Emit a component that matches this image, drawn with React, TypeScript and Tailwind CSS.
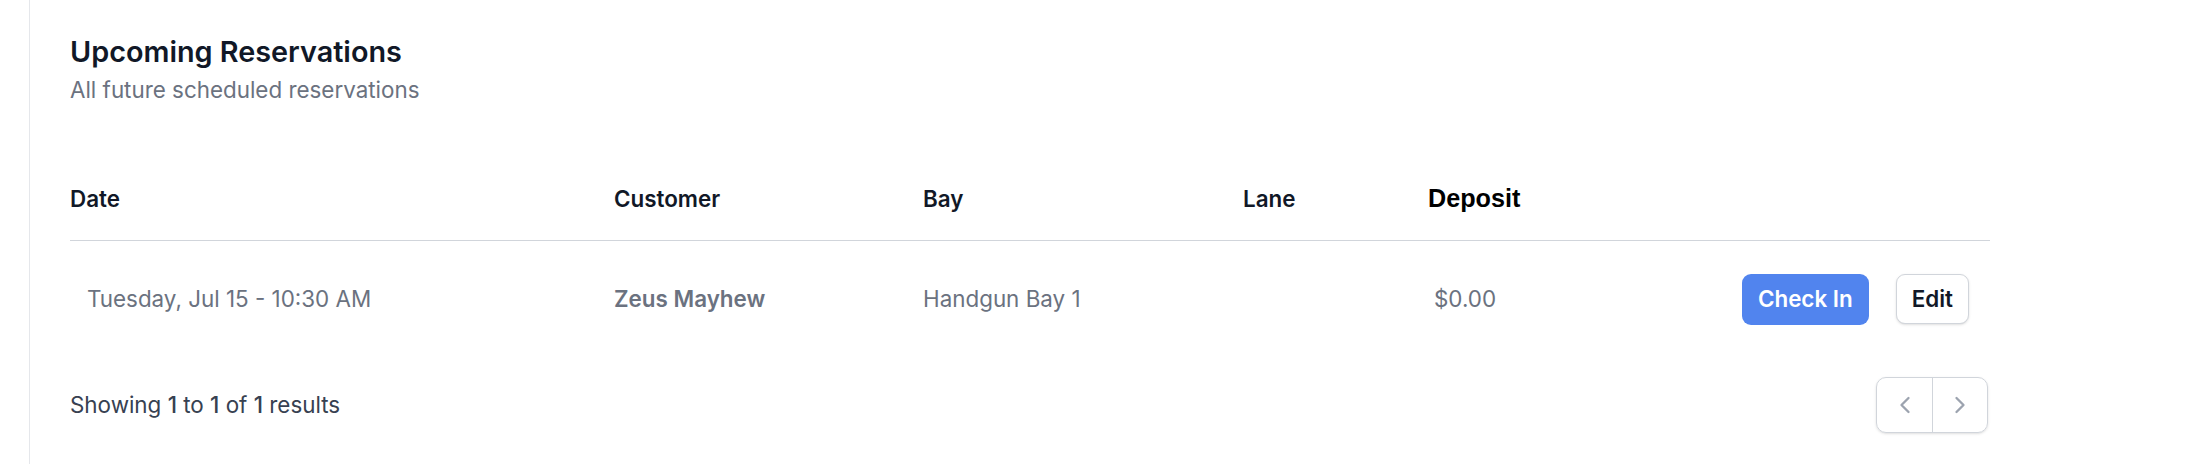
import { ChevronLeft, ChevronRight } from 'lucide-react';

const reservations = [
  {
    id: 1,
    date: 'Tuesday, Jul 15 - 10:30 AM',
    customer: 'Zeus Mayhew',
    bay: 'Handgun Bay 1',
    lane: '',
    deposit: '$0.00',
  },
];

const cols = 'grid grid-cols-[544px_309px_320px_185px_200px_1fr] items-center';

export default function App() {
  return (
    <div className="flex min-h-[464px] bg-white font-['Inter',sans-serif]">
      <div className="w-[29px] shrink-0" />
      <div className="flex-1 border-l border-[#e5e7eb] pl-[40px]">
        <div className="w-[1920px]">
          <div className="pt-[32px]">
            <h2 className="text-[28.8px] leading-[39px] font-semibold text-[#111827]">Upcoming Reservations</h2>
            <p className="mt-[2px] text-[22.4px] leading-[33px] text-[#6b7280]">All future scheduled reservations</p>
          </div>

          <div className="mt-[51px]">
            <div className={`${cols} h-[84px] border-b border-[#d1d5db] text-[22.4px] font-semibold text-[#111827]`}>
              <div>Date</div>
              <div>Customer</div>
              <div>Bay</div>
              <div>Lane</div>
              <div className="font-['Liberation_Sans',Arial,sans-serif] text-[25.2px] font-bold text-black">Deposit</div>
              <div />
            </div>

            {reservations.map((r) => (
              <div key={r.id} className={`${cols} h-[116px] text-[22.4px] text-[#6b7280]`}>
                <div className="pl-[17px]">{r.date}</div>
                <div className="font-semibold">{r.customer}</div>
                <div>{r.bay}</div>
                <div>{r.lane}</div>
                <div className="pl-[6px]">{r.deposit}</div>
                <div className="flex justify-end gap-[27px] pr-[21px]">
                  <button className="h-[51px] rounded-[9px] bg-[#5184ee] px-[16px] font-semibold text-white">
                    Check In
                  </button>
                  <button className="h-[50px] rounded-[9px] border border-[#d1d5db] bg-white px-[15px] font-semibold text-[#111827] shadow-sm">
                    Edit
                  </button>
                </div>
              </div>
            ))}
          </div>

          <div className="mt-[20px] flex items-center justify-between pr-[2px]">
            <p className="text-[22.4px] text-[#374151]">
              Showing <span className="font-medium">1</span> to <span className="font-medium">1</span> of{' '}
              <span className="font-medium">1</span> results
            </p>
            <div className="flex h-[56px] overflow-hidden rounded-[10px] border border-[#d1d5db] shadow-sm">
              <button className="flex w-[55px] items-center justify-center text-[#9ca3af]">
                <ChevronLeft size={28} strokeWidth={2} />
              </button>
              <button className="flex w-[55px] items-center justify-center border-l border-[#d1d5db] text-[#9ca3af]">
                <ChevronRight size={28} strokeWidth={2} />
              </button>
            </div>
          </div>
        </div>
      </div>
    </div>
  );
}
